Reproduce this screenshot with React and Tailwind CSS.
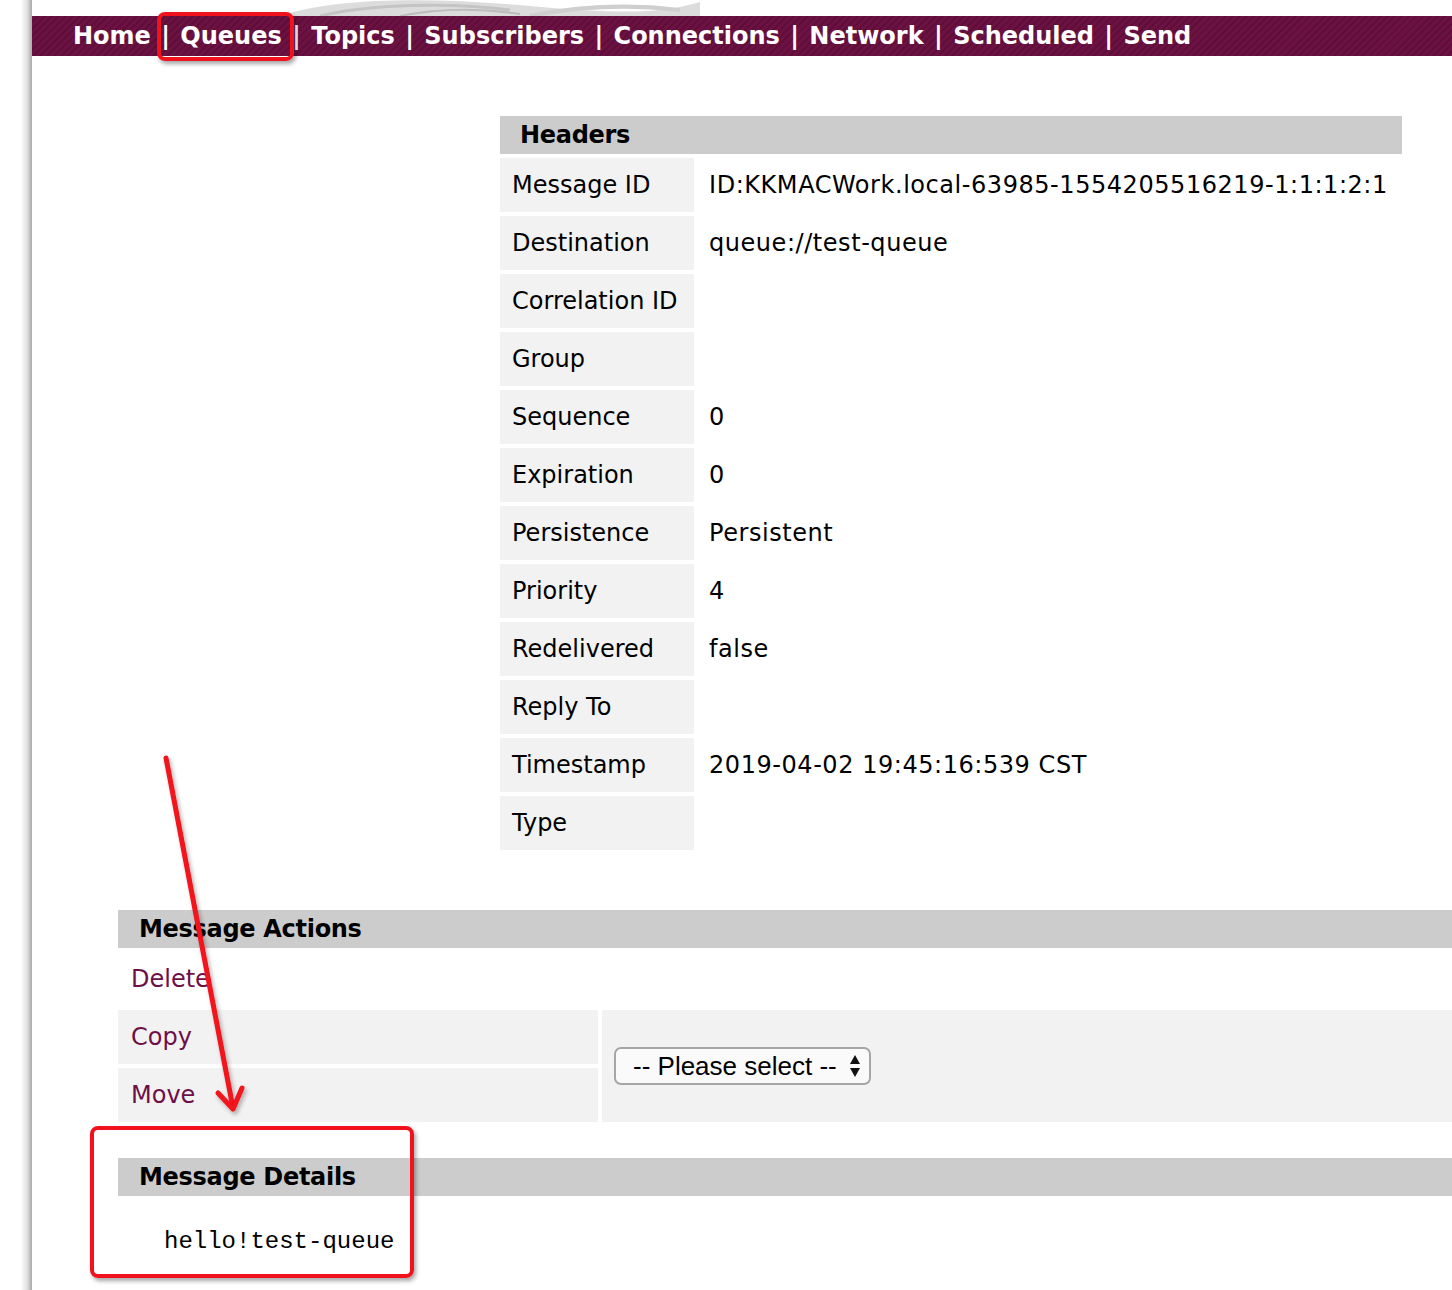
import React from 'react';

const NAV = ['Home', 'Queues', 'Topics', 'Subscribers', 'Connections', 'Network', 'Scheduled', 'Send'];

const HEADERS = [
  ['Message ID', 'ID:KKMACWork.local-63985-1554205516219-1:1:1:2:1'],
  ['Destination', 'queue://test-queue'],
  ['Correlation ID', ''],
  ['Group', ''],
  ['Sequence', '0'],
  ['Expiration', '0'],
  ['Persistence', 'Persistent'],
  ['Priority', '4'],
  ['Redelivered', 'false'],
  ['Reply To', ''],
  ['Timestamp', '2019-04-02 19:45:16:539 CST'],
  ['Type', ''],
];

const SectionBar = ({ children, className = '' }) => (
  <div className={'h-[38px] bg-[#cccccc] flex items-center font-bold tracking-[-0.3px] text-black ' + className}>
    {children}
  </div>
);

// faint swirl from the logo that peeks above the nav bar
const LogoStrip = () => (
  <svg width="420" height="16" viewBox="0 0 420 16" className="ml-[248px]">
    <path d="M0 16 C 60 -4, 160 -2, 250 6 S 380 14, 420 2 L 420 16 Z" fill="#dcdcdc" />
    <path d="M40 16 C 90 4, 170 2, 230 10" stroke="#c4c4c4" strokeWidth="3" fill="none" />
    <path d="M250 16 C 300 6, 350 4, 400 10" stroke="#cfcfcf" strokeWidth="4" fill="none" />
    <path d="M120 16 C 160 8, 200 8, 240 14" stroke="#bdbdbd" strokeWidth="2" fill="none" />
  </svg>
);

const Annotations = () => (
  <>
    <div className="absolute left-[157px] top-[12px] w-[137px] h-[49px] border-[4px] border-[#f2121d] rounded-[8px] shadow-[2px_3px_4px_rgba(0,0,0,0.35)]" />
    <div className="absolute left-[90px] top-[1126px] w-[324px] h-[152px] border-[4px] border-[#f2121d] rounded-[8px] shadow-[2px_3px_4px_rgba(0,0,0,0.35)]" />
    <svg className="absolute left-0 top-0 pointer-events-none" width="400" height="1200" viewBox="0 0 400 1200">
      <defs>
        <filter id="sh" x="-20%" y="-20%" width="140%" height="140%">
          <feDropShadow dx="2" dy="3" stdDeviation="2" floodColor="#000" floodOpacity="0.3" />
        </filter>
      </defs>
      <g filter="url(#sh)" stroke="#f2121d" strokeWidth="5" strokeLinecap="round" strokeLinejoin="round" fill="none">
        <path d="M166 758 L233 1108" />
        <path d="M218 1093 L233 1109 L242 1088" />
      </g>
    </svg>
  </>
);

export default function App() {
  return (
    <div className="relative min-h-[1290px] bg-white flex font-['DejaVu_Sans',Verdana,sans-serif] text-[24px] text-black overflow-hidden">
      <div className="w-[22px] shrink-0" />
      <div className="w-[10px] shrink-0 bg-linear-to-r from-[#f7f7f7] via-[#e2e2e2] to-[#a9a9a9]" />
      <div className="flex-1 min-w-0">
        <div className="h-[16px] overflow-hidden">
          <LogoStrip />
        </div>
        <nav className="h-[40px] flex items-center pl-[41px] text-white font-bold text-[24px] [word-spacing:2px] bg-[repeating-linear-gradient(135deg,#6c1242_0px,#6c1242_3px,#5f0d39_3px,#5f0d39_5px)] whitespace-pre">
          {NAV.map((item, i) => (
            <span key={item}>
              {i > 0 && ' | '}
              {item}
            </span>
          ))}
        </nav>

        <div className="ml-[468px] mt-[60px] w-[902px]">
          <SectionBar className="pl-[20px]">Headers</SectionBar>
          <div className="grid grid-cols-[194px_1fr] gap-[4px] mt-[4px]">
            {HEADERS.map(([label, value]) => (
              <React.Fragment key={label}>
                <div className="h-[54px] bg-[#f2f2f2] pl-[12px] flex items-center">{label}</div>
                <div className="h-[54px] pl-[11px] flex items-center whitespace-nowrap tracking-[0.55px]">{value}</div>
              </React.Fragment>
            ))}
          </div>
        </div>

        <div className="ml-[86px] mt-[60px]">
          <SectionBar className="pl-[21px]">Message Actions</SectionBar>
          <div className="grid grid-cols-[480px_1fr] grid-rows-[54px_54px_54px] gap-[4px] mt-[4px]">
            <div className="pl-[13px] flex items-center text-[#6e0f47]">Delete</div>
            <div />
            <div className="bg-[#f2f2f2] pl-[13px] flex items-center text-[#6e0f47]">Copy</div>
            <div className="row-span-2 bg-[#f2f2f2] pl-[12px] flex items-center">
              <div className="w-[257px] h-[38px] rounded-[7px] border-[2px] border-[#a6a6a6] bg-[#fafafa] flex items-center justify-between pl-[17px] pr-[9px] font-['Liberation_Sans',Arial,sans-serif] text-[26px]">
                <span>-- Please select --</span>
                <svg width="10" height="22" viewBox="0 0 10 22">
                  <path d="M5 0 L10 9 L0 9 Z" fill="#111" />
                  <path d="M5 22 L10 13 L0 13 Z" fill="#111" />
                </svg>
              </div>
            </div>
            <div className="bg-[#f2f2f2] pl-[13px] flex items-center text-[#6e0f47]">Move</div>
          </div>
        </div>

        <div className="ml-[86px] mt-[36px]">
          <SectionBar className="pl-[21px]">Message Details</SectionBar>
          <pre className="pl-[46px] pt-[32px] font-['Liberation_Mono','Courier_New',monospace] text-[24px] leading-[28px]">hello!test-queue</pre>
        </div>
      </div>
      <Annotations />
    </div>
  );
}
